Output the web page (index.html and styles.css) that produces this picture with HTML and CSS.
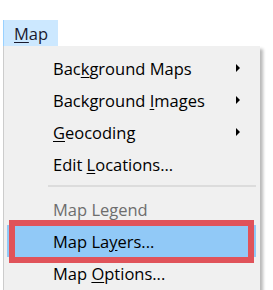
FILE: index.html
```html
<!DOCTYPE html>
<html lang="en">
<head>
    <meta charset="UTF-8">
    <meta name="viewport" content="width=device-width, initial-scale=1.0">
    <title>Map menu</title>
    <link rel="stylesheet" href="styles.css">
</head>
<body>
    <div class="menubar">
        <span class="menubar-item"><u>M</u>ap</span>
    </div>

    <div class="menu">
        <div class="item">
            <span>Bac<u>k</u>ground Maps</span>
            <span class="arrow"></span>
        </div>
        <div class="item">
            <span>Background <u>I</u>mages</span>
            <span class="arrow"></span>
        </div>
        <div class="item">
            <span><u>G</u>eocoding</span>
            <span class="arrow"></span>
        </div>
        <div class="item">
            <span>Edit <u>L</u>ocations...</span>
        </div>

        <div class="separator"></div>

        <div class="item disabled">
            <span>Map Legend</span>
        </div>
        <div class="item active">
            <span>Map La<u>y</u>ers...</span>
        </div>
        <div class="item">
            <span>Map <u>O</u>ptions...</span>
        </div>

        <!-- рамка-выделение поверх пункта -->
        <div class="callout"></div>
    </div>
</body>
</html>
```

FILE: styles.css
```css
body, html {
    margin: 0;
    padding: 0;
    width: 100%;
    height: 100%;
    background-color: #ffffff;
    font-family: "Open Sans", "Noto Sans", sans-serif;
    font-size: 16.5px;
    color: #000000;
    overflow: hidden;
}

u {
    text-underline-offset: 2px;
}

.menubar {
    padding-top: 20px;
    padding-left: 3px;
    height: 26px;
    display: flex;
}

.menubar-item {
    display: flex;
    align-items: center;
    width: 55px;
    box-sizing: border-box;
    padding-left: 10px;
    background-color: #cce8ff;
    border-left: 1px solid #99d1ff;
    color: #1a1a2e;
}

.menu {
    position: relative;
    margin-left: 3px;
    width: 257px;
    height: 244px;
    box-sizing: border-box;
    padding: 6px 4px 0 3px;
    background-color: #f0f0f0;
    border-left: 1px solid #cccccc;
    box-shadow: 3px 3px 3px rgba(0, 0, 0, 0.28);
}

.item {
    display: flex;
    align-items: center;
    justify-content: space-between;
    height: 32px;
    padding-left: 46px;
    padding-right: 16px;
}

.item.disabled {
    color: #6d6d6d;
}

.item.active {
    background-color: #91c9f7;
}

.arrow {
    width: 0;
    height: 0;
    border-top: 4px solid transparent;
    border-bottom: 4px solid transparent;
    border-left: 4px solid #000000;
}

.separator {
    height: 13px;
    margin-left: 41px;
    display: flex;
    align-items: center;
}

.separator::before {
    content: "";
    flex: 1;
    height: 2px;
    background-color: #dcdcdc;
    margin-top: -2px;
}

.callout {
    position: absolute;
    left: 5px;
    top: 174px;
    width: 245px;
    height: 43px;
    box-sizing: border-box;
    border: 6px solid #e0535a;
}
```
